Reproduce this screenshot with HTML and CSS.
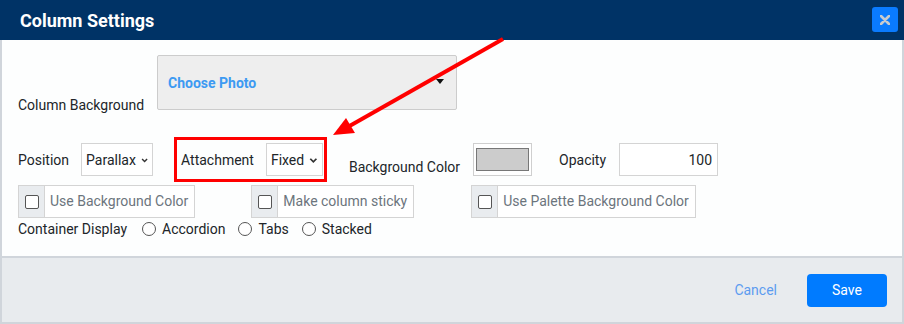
FILE: index.html
```html
<!DOCTYPE html>
<html>
<head>
    <title>Column Settings</title>
    <link rel="stylesheet" href="styles.css">
</head>
<body>
    <div class="modal">
        <div class="modal-header">
            <h1>Column Settings</h1>
            <button class="close" type="button">
                <svg width="10" height="10" viewBox="0 0 10 10"><path d="M1 1l8 8M9 1l-8 8" stroke="#c8cbd0" stroke-width="2.6" stroke-linecap="round"/></svg>
            </button>
        </div>

        <div class="modal-body">
            <div class="row row-bg">
                <label class="bg-label">Column Background</label>
                <div class="photo-box">
                    <span class="photo-text">Choose Photo</span>
                    <span class="caret"></span>
                </div>
            </div>

            <div class="row row-pos">
                <label class="lbl">Position</label>
                <div class="select sel-pos">Parallax
                    <svg class="chev" width="10" height="7" viewBox="0 0 10 7"><path d="M1.5 1.5l3.5 3.5 3.5-3.5" fill="none" stroke="#333" stroke-width="2"/></svg>
                </div>
                <div class="mark">
                    <label class="lbl">Attachment</label>
                    <div class="select sel-att">Fixed
                        <svg class="chev" width="10" height="7" viewBox="0 0 10 7"><path d="M1.5 1.5l3.5 3.5 3.5-3.5" fill="none" stroke="#333" stroke-width="2"/></svg>
                    </div>
                </div>
                <label class="lbl lbl-low">Background Color</label>
                <div class="swatch"><span></span></div>
                <label class="lbl lbl-op">Opacity</label>
                <input class="opacity" type="text" value="100">
            </div>

            <div class="row row-checks">
                <div class="check-group g1">
                    <span class="addon"><span class="box"></span></span>
                    <span class="check-text">Use Background Color</span>
                </div>
                <div class="check-group g2">
                    <span class="addon"><span class="box"></span></span>
                    <span class="check-text">Make column sticky</span>
                </div>
                <div class="check-group">
                    <span class="addon"><span class="box"></span></span>
                    <span class="check-text">Use Palette Background Color</span>
                </div>
            </div>

            <div class="row row-radios">
                <label class="lbl">Container Display</label>
                <span class="radio"></span><span class="radio-text">Accordion</span>
                <span class="radio"></span><span class="radio-text">Tabs</span>
                <span class="radio"></span><span class="radio-text">Stacked</span>
            </div>
        </div>

        <div class="modal-footer">
            <a class="cancel" href="#">Cancel</a>
            <button class="save" type="button">Save</button>
        </div>

        <!-- red annotation arrow -->
        <svg class="arrow" width="904" height="324" viewBox="0 0 904 324">
            <line x1="503" y1="39" x2="346" y2="128" stroke="#ff0000" stroke-width="4"/>
            <polygon points="333,135 346,118 355,133" fill="#ff0000"/>
        </svg>
    </div>
</body>
</html>
```

FILE: styles.css
```css
* { box-sizing: border-box; }
body { margin: 0; font-family: Roboto, "Liberation Sans", Arial, sans-serif; font-size: 14px; color: #212529; background: #fff; }
.modal { position: relative; width: 904px; height: 324px; }

.modal-header { height: 40px; background: #003366; display: flex; align-items: center; justify-content: space-between; padding: 0 6px 0 20px; }
.modal-header h1 { margin: 0; color: #fff; font-size: 18px; font-weight: bold; }
.close { width: 26px; height: 25px; margin-top: -1px; background: #0a7bff; border: none; border-radius: 3px; padding: 0; display: flex; align-items: center; justify-content: center; }

.modal-body { height: 218px; border-left: 2px solid #d0d5db; border-right: 2px solid #d0d5db; border-bottom: 2px solid #d0d5db; padding: 15px 16px 0 16px; background: #fdfefe; }
.row { display: flex; align-items: center; }

.row-bg { align-items: flex-end; height: 55px; }
.bg-label { width: 139px; line-height: 20px; margin-bottom: -5px; }
.photo-box { width: 300px; height: 55px; background: #eeeeee; border: 1px solid #cccccc; border-radius: 2px; display: flex; align-items: center; justify-content: space-between; padding: 0 12px 0 10px; }
.photo-text { color: #3d9af2; font-weight: bold; font-size: 14px; }
.caret { width: 0; height: 0; border-left: 4px solid transparent; border-right: 4px solid transparent; border-top: 5px solid #111; margin-top: -2px; }

.row-pos { margin-top: 27px; height: 45px; }
.lbl { line-height: 20px; }
.select { height: 33px; border: 1px solid #d4d4d4; background: #fff; display: flex; align-items: center; padding: 0 4px 0 4px; gap: 5px; }
.chev { margin-top: 2px; }
.sel-pos { width: 72px; margin-left: 12px; }
.mark { display: flex; align-items: center; height: 45px; border: 3px solid #ff0000; padding: 0 1px 0 4px; margin-left: 21px; }
.sel-att { width: 57px; margin-left: 12px; }
.lbl-low { align-self: flex-end; margin-bottom: 5px; margin-left: 22px; }
.swatch { width: 59px; height: 33px; border: 1px solid #cfcfcf; background: #fff; padding: 4px 2px; margin-left: 13px; }
.swatch span { display: block; width: 100%; height: 100%; background: #cccccc; border: 1px solid #777; }
.lbl-op { margin-left: 27px; }
.opacity { width: 99px; height: 33px; margin-left: 13px; border: 1px solid #d4d4d4; font: inherit; text-align: right; padding: 0 5px; color: #212529; }

.row-checks { margin-top: 3px; height: 33px; }
.check-group { display: flex; height: 33px; border: 1px solid #d4d4d4; background: #fff; }
.g1 { margin-right: 56px; }
.g2 { margin-right: 57px; }
.addon { width: 26px; background: #e9ecef; border-right: 1px solid #d4d4d4; display: flex; align-items: center; justify-content: center; }
.box { width: 14px; height: 14px; border: 1px solid #555; border-radius: 2px; background: #fff; }
.check-text { color: #6c757d; padding: 0 6px 0 5px; line-height: 31px; }

.row-radios { margin-top: 1px; height: 20px; }
.radio { width: 14px; height: 14px; border: 1px solid #555; border-radius: 50%; margin-left: 15px; margin-right: 6px; background: #fff; }
.radio-text + .radio { margin-left: 13px; }

.modal-footer { height: 66px; background: #e8ebee; border-left: 2px solid #d0d5db; border-right: 2px solid #d0d5db; border-bottom: 2px solid #d0d5db; display: flex; align-items: center; justify-content: flex-end; padding: 0 15px 0 0; }
.cancel { color: #5c9cf0; text-decoration: none; margin-right: 30px; }
.save { width: 80px; height: 33px; background: #007bff; color: #fff; border: none; border-radius: 4px; font: inherit; }

.arrow { position: absolute; left: 0; top: 0; pointer-events: none; }
```
